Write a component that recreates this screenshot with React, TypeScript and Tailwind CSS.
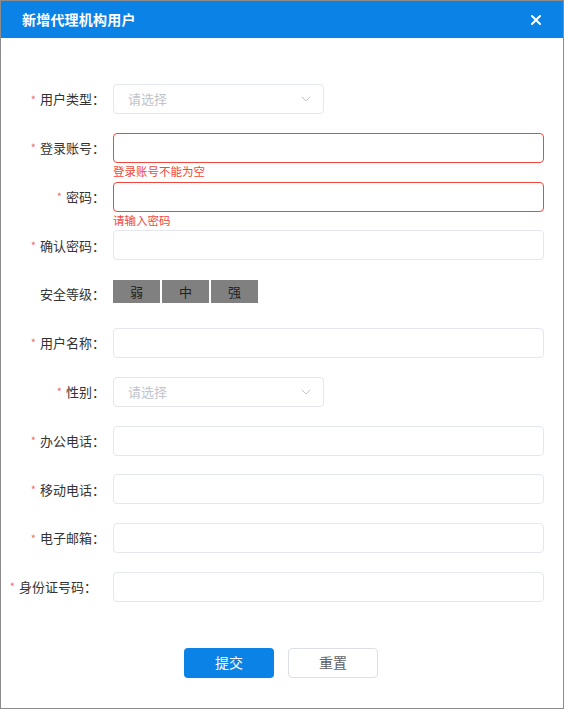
import { X, ChevronDown } from 'lucide-react'

const font = { fontFamily: '"Noto Sans CJK SC", "Noto Sans", sans-serif' }

type Row = {
  label: string
  required?: boolean
  kind: 'input' | 'select' | 'level'
  error?: string
  labelPad?: string
}

const rows: Row[] = [
  { label: '用户类型', required: true, kind: 'select' },
  { label: '登录账号', required: true, kind: 'input', error: '登录账号不能为空' },
  { label: '密码', required: true, kind: 'input', error: '请输入密码' },
  { label: '确认密码', required: true, kind: 'input' },
  { label: '安全等级', kind: 'level' },
  { label: '用户名称', required: true, kind: 'input' },
  { label: '性别', required: true, kind: 'select' },
  { label: '办公电话', required: true, kind: 'input' },
  { label: '移动电话', required: true, kind: 'input' },
  { label: '电子邮箱', required: true, kind: 'input' },
  { label: '身份证号码', required: true, kind: 'input', labelPad: 'pr-[16px]' },
]

function Field({ row }: { row: Row }) {
  if (row.kind === 'select') {
    return (
      <div className="w-[211px] h-[30px] border border-[#e4e7ed] rounded-[4px] flex items-center justify-between pl-[14px] pr-[9px]">
        <span className="text-[13px] text-[#c0c4cc]">请选择</span>
        <ChevronDown className="w-[16px] h-[16px] text-[#c0c4cc]" strokeWidth={1.5} />
      </div>
    )
  }
  if (row.kind === 'level') {
    return (
      <div className="h-[30px] flex items-start pt-[1px] gap-[2px]">
        {['弱', '中', '强'].map((t) => (
          <div key={t} className="w-[47px] h-[23px] bg-[#808080] flex items-center justify-center text-[13px] text-[#222]">
            {t}
          </div>
        ))}
      </div>
    )
  }
  return (
    <div className="relative w-[431px]">
      <div
        className={`h-[30px] rounded-[4px] border ${
          row.error ? 'border-[#f2473c]' : 'border-[#e4e7ed]'
        }`}
      />
      {row.error && (
        <div className="absolute left-0 top-[31px] text-[11.5px] leading-[14px] text-[#f2473c]">{row.error}</div>
      )}
    </div>
  )
}

export default function App() {
  return (
    <div className="w-[564px] h-[709px] border border-[#8c8c8c] bg-white flex flex-col" style={font}>
      <div className="h-[37px] bg-[#0b82e6] flex items-center justify-between pl-[21px] pr-[19px] shrink-0">
        <h1 className="text-[14px] font-bold text-white tracking-[0.2px]">新增代理机构用户</h1>
        <X className="w-[16px] h-[16px] text-white" strokeWidth={3} />
      </div>

      <div className="pt-[46px]">
        {rows.map((row) => (
          <div key={row.label} className="flex items-center mb-[18.8px]">
            <label
              className={`w-[112px] shrink-0 flex items-center justify-end text-[13px] text-[#333] ${
                row.labelPad ?? 'pr-[8px]'
              }`}
            >
              {row.required && <span className="text-[#f56c6c] text-[11px] mr-[4px] leading-none">*</span>}
              <span>{row.label}：</span>
            </label>
            <Field row={row} />
          </div>
        ))}

        <div className="flex justify-center gap-[14px] mt-[46px] pr-[2px]">
          <button className="w-[90px] h-[30px] rounded-[4px] bg-[#0b82e6] text-white text-[14px]">提交</button>
          <button className="w-[90px] h-[30px] rounded-[4px] border border-[#dcdfe6] bg-white text-[#606266] text-[14px]">
            重置
          </button>
        </div>
      </div>
    </div>
  )
}
